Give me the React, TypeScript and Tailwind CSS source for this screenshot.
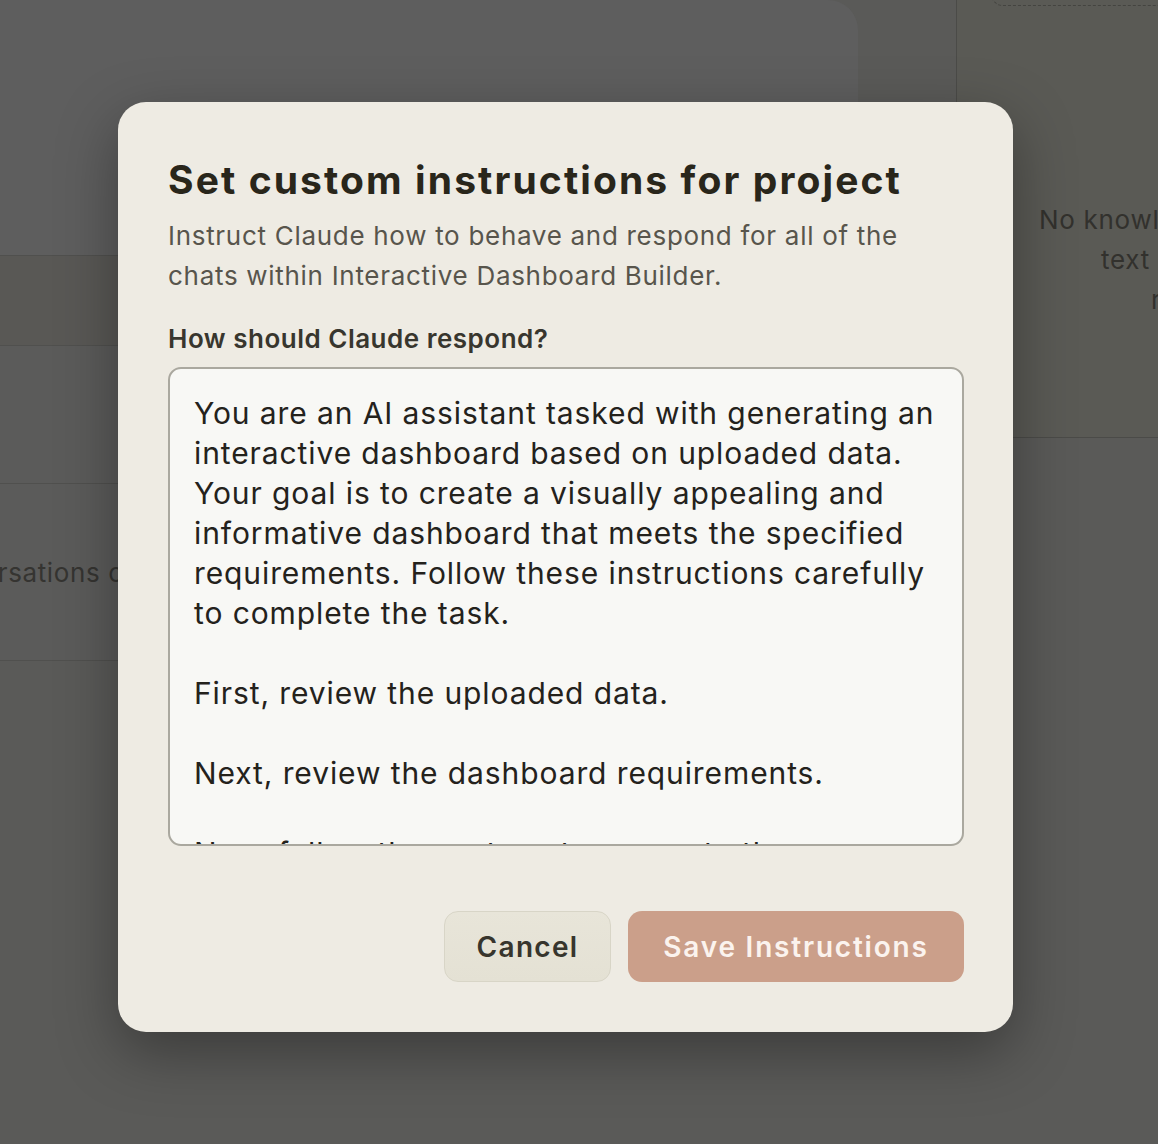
import { useState } from "react";

const INSTRUCTIONS = [
  "You are an AI assistant tasked with generating an",
  "interactive dashboard based on uploaded data.",
  "Your goal is to create a visually appealing and",
  "informative dashboard that meets the specified",
  "requirements. Follow these instructions carefully",
  "to complete the task.",
  "",
  "First, review the uploaded data.",
  "",
  "Next, review the dashboard requirements.",
  "",
  "Now, follow these steps to generate the",
  "interactive dashboard:",
  "",
  "1. Analyze the data structure and content.",
].join("\n");

const font = { fontFamily: "Inter, 'Open Sans', sans-serif" };

const App: React.FC = () => {
  const [text, setText] = useState(INSTRUCTIONS);

  return (
    <div className="relative h-[1144px] w-full overflow-hidden bg-[#5a5a58]" style={font}>
      {/* dimmed project page behind the dialog */}
      <div className="flex h-full">
        {/* --------------- LEFT --------------- */}
        <div className="w-[956px] shrink-0">
          <div className="h-[255px] w-[858px] rounded-tr-[30px] bg-[#5e5e5e]" />
          <div className="h-[90px] border-t border-[#50504e] bg-[#595855]" />
          <div className="h-[138px] border-t border-[#50504e] bg-[#5b5b5a]" />
          <div className="flex h-[177px] items-center border-t border-[#50504e] bg-[#5b5b5a]">
            <span className="-ml-[84px] whitespace-nowrap text-[26px] tracking-[0.6px] text-[#353431]">
              Conversations on this project
            </span>
          </div>
          <div className="h-[484px] border-t border-[#50504e]" />
        </div>

        {/* --------------- RIGHT --------------- */}
        <div className="flex-1">
          <div className="flex h-[438px] flex-col border-b border-l border-[#4b4b48] bg-[#5a5a55]">
            <div className="ml-[34px] -mt-[20px] h-[26px] shrink-0 rounded-bl-[12px] border border-dashed border-[#444440]" />
            <div className="pt-[194px] pl-[82px] text-[26px] leading-[40px] tracking-[0.7px] text-[#32312d] whitespace-nowrap">
              <div>No knowledge added yet.</div>
              <div className="pl-[62px]">text</div>
              <div className="pl-[112px]">r</div>
            </div>
          </div>
        </div>
      </div>

      {/* --------------- DIALOG --------------- */}
      <div className="absolute inset-0 flex items-start pl-[118px] pt-[102px]">
        <div className="w-[895px] rounded-[28px] bg-[#eeebe3] pl-[50px] pr-[49px] pt-[52px] pb-[50px] shadow-[0_20px_60px_rgba(0,0,0,0.35)]">
          <h2 className="text-[39px] font-bold leading-[52px] tracking-[2.1px] text-[#29261b]">
            Set custom instructions for project
          </h2>
          <p className="mt-[10px] text-[26px] leading-[40px] tracking-[0.7px] text-[#58554c]">
            Instruct Claude how to behave and respond for all of the
            <br />
            chats within Interactive Dashboard Builder.
          </p>

          <label className="mt-[25px] block text-[26px] font-semibold leading-[36px] tracking-[0.5px] text-[#38362e]">
            How should Claude respond?
          </label>

          <textarea
            className="mt-[10px] block h-[479px] w-full resize-none overflow-hidden whitespace-pre rounded-[13px] border-2 border-[#aaa89f] bg-[#f8f8f5] px-[24px] pt-[24px] text-[30px] leading-[40px] tracking-[0.9px] text-[#24221c] focus:outline-none"
            wrap="off"
            value={text}
            onChange={(e) => setText(e.target.value)}
          />

          <div className="mt-[65px] flex justify-end gap-[17px]">
            <button className="flex h-[71px] w-[167px] items-center justify-center rounded-[14px] border border-[#d8d5c7] bg-gradient-to-b from-[#e8e5d9] to-[#e4e1d4] text-[28px] font-semibold tracking-[1.3px] text-[#37352d]">
              Cancel
            </button>
            <button className="flex h-[71px] w-[336px] items-center justify-center rounded-[14px] bg-[#cb9f8a] text-[28px] font-semibold tracking-[1.8px] text-[#fbf3ee]">
              Save Instructions
            </button>
          </div>
        </div>
      </div>
    </div>
  );
};

export default App;
